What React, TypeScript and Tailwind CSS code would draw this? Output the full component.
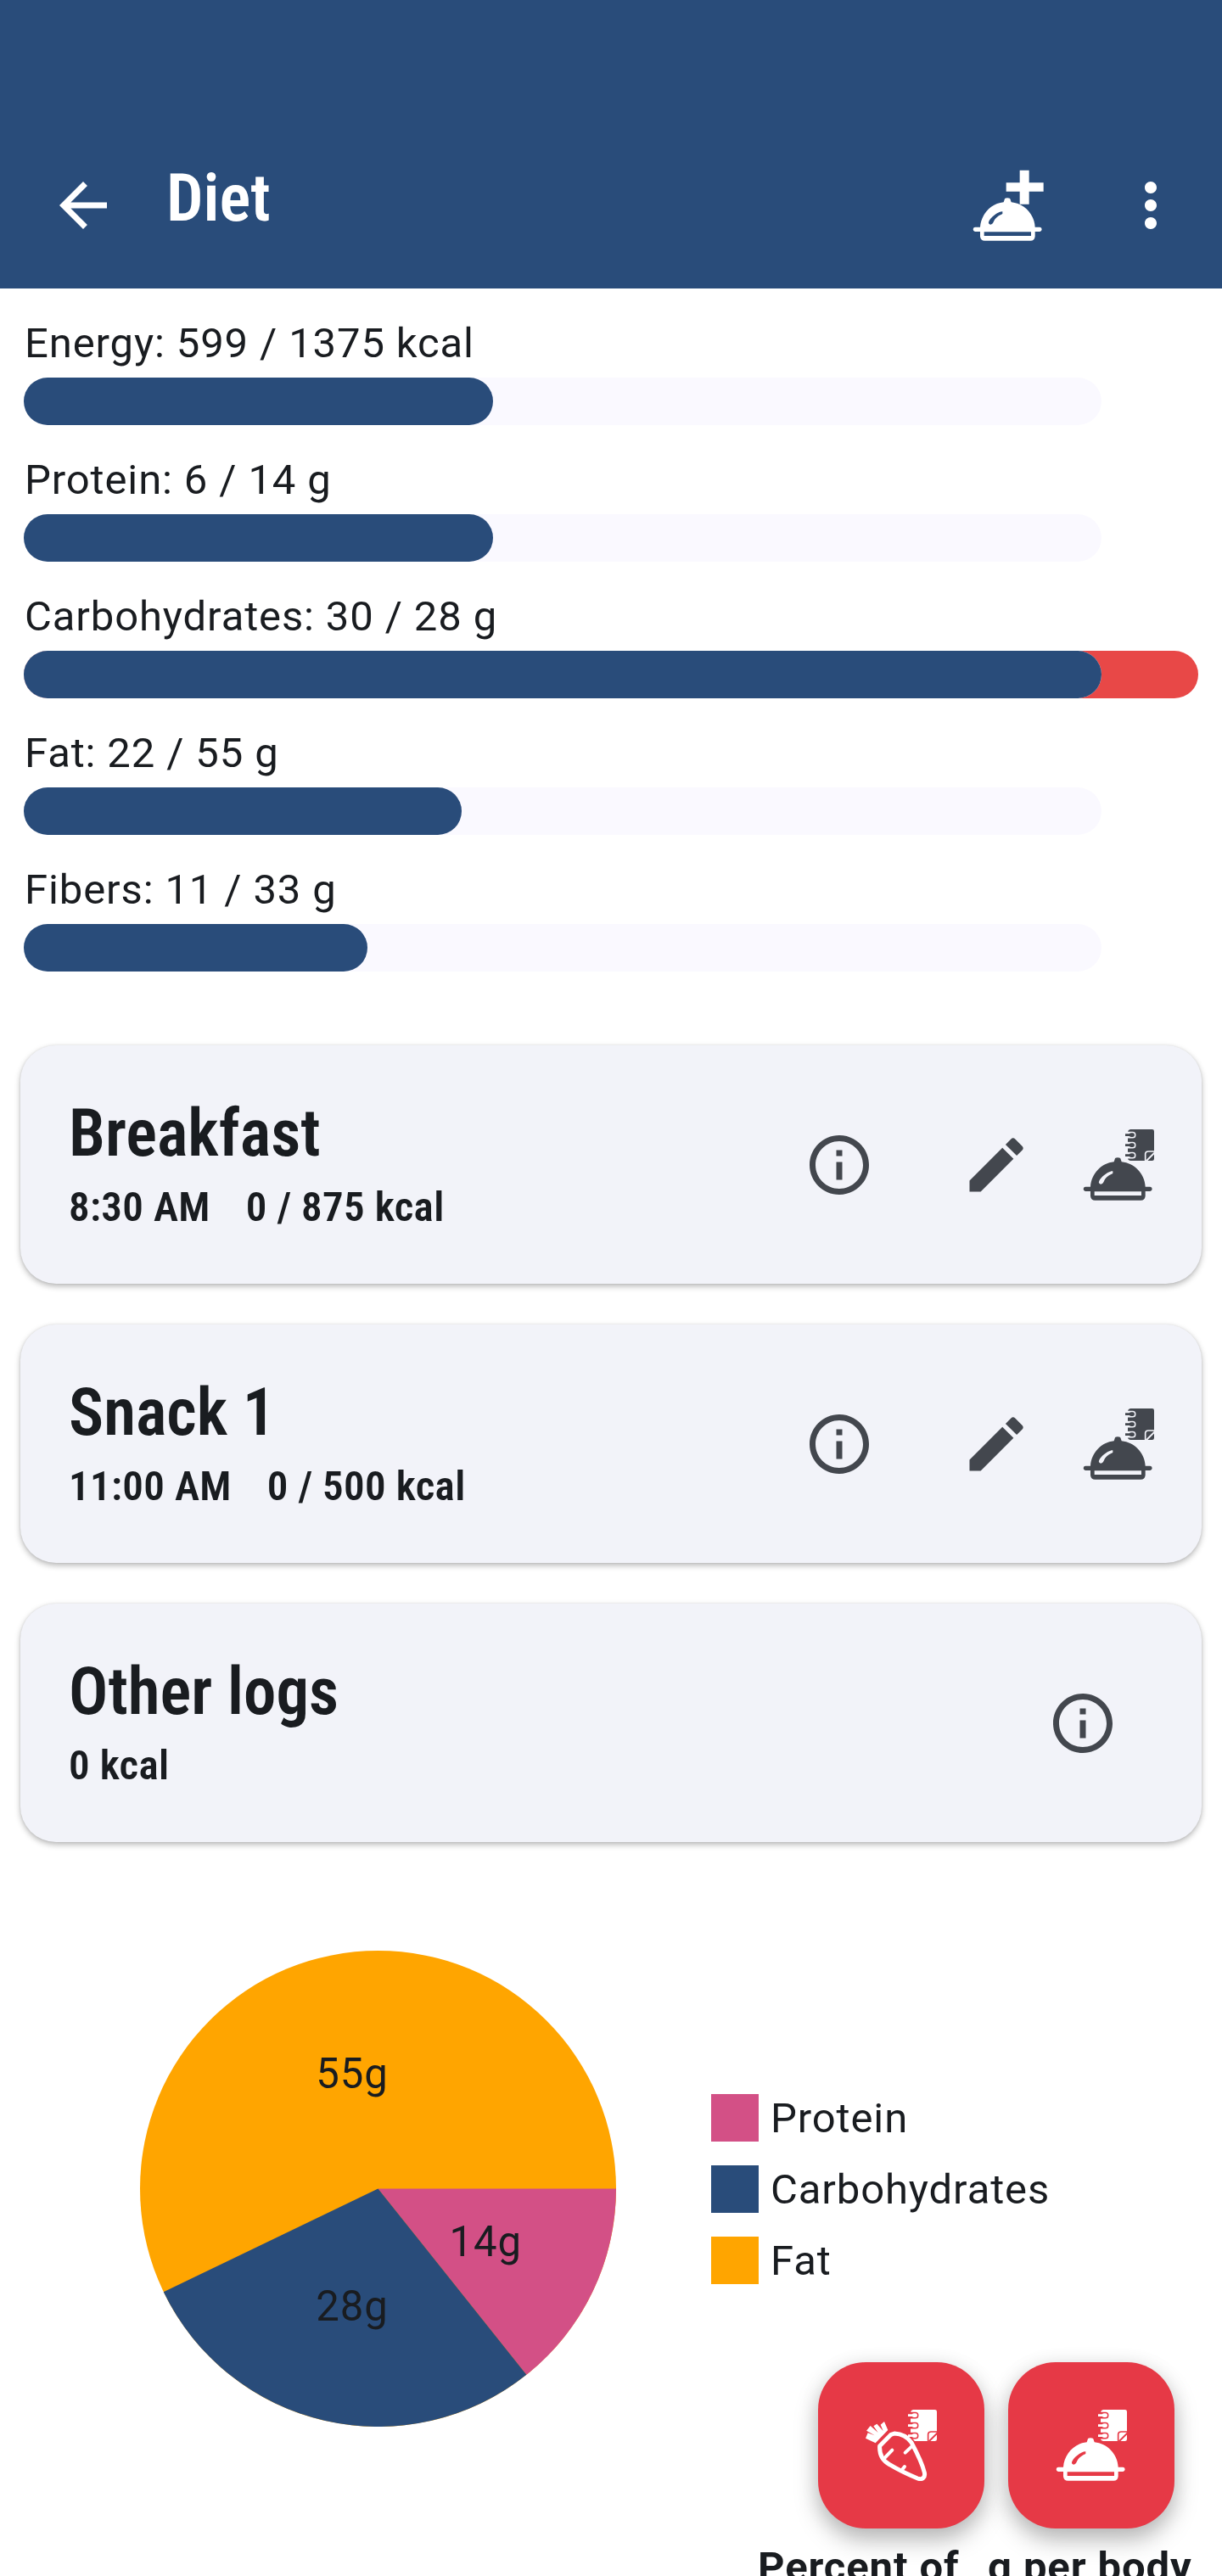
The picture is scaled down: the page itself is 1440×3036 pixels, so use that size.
import React from "react";
import { MdArrowBack, MdEdit, MdInfoOutline, MdMoreVert } from "react-icons/md";

const goals = [
  { label: "Energy: 599 / 1375 kcal", value: 43.54, over: false },
  { label: "Protein: 6 / 14 g", value: 43.54, over: false },
  { label: "Carbohydrates: 30 / 28 g", value: 100, over: true },
  { label: "Fat: 22 / 55 g", value: 40.6, over: false },
  { label: "Fibers: 11 / 33 g", value: 31.9, over: false },
];

const meals = [
  { name: "Breakfast", time: "8:30 AM", energy: "0 / 875 kcal" },
  { name: "Snack 1", time: "11:00 AM", energy: "0 / 500 kcal" },
  { name: "Other logs", time: "", energy: "0 kcal" },
];

const legend = [
  { label: "Protein", color: "bg-[#d35086]" },
  { label: "Carbohydrates", color: "bg-[#294c7a]" },
  { label: "Fat", color: "bg-[#ffa500]" },
];

const carrotPath =
  "M90 88 L50 128 C48 160 62 182 85 194 C118 214 150 229 184 243 C200 249 212 240 208 222 C200 190 176 142 162 116 C148 96 126 85 102 84 Z";

function Dish() {
  return (
    <path
      fillRule="evenodd"
      d="M113 106 Q113 100 123 100 Q134 100 134 106 L137 115 C182 119 219 157 221 203 L238 203 Q245 204 245 211 Q245 218 238 219 L221 219 L221 236 Q219 251 205 251 L43 251 Q29 251 27 236 L27 219 L9 219 Q2 218 2 211 Q2 204 9 203 L27 203 C30 157 66 119 110 115 Z M41 220 L41 234 L207 234 L207 220 Z M106 148 C91 146 54 175 57 190 C63 198 72 193 76 181 C82 168 94 162 106 156 Z"
    />
  );
}

function Notebook({ id, carrot = false }: { id: string; carrot?: boolean }) {
  return (
    <>
      <mask id={id} maskUnits="userSpaceOnUse" x="0" y="0" width="252" height="252">
        <rect width="252" height="252" fill="white" />
        <g fill="none" stroke="black" strokeLinecap="round">
          <path strokeWidth="23" d="M145 20 H176 M145 56 H176 M145 92 H176" />
          <path strokeWidth="5" d="M221 116 V86 Q222 78 232 78 H256" />
          <path strokeWidth="6" d="M224 112 L254 82" />
          {carrot && <path strokeWidth="24" d={carrotPath} />}
        </g>
      </mask>
      <path
        mask={`url(#${id})`}
        d="M168 0 H245 Q252 0 252 7 V104 Q252 111 245 111 H168 Q159 109 159 102 V9 Q160 2 168 0 Z"
      />
      {/* pieces of paper left between the rings */}
      <path d="M159 33 H172 V43 H159 Z M159 69 H172 V79 H159 Z" />
      <g fill="none" stroke="currentColor">
        <path strokeWidth="8" d="M150 20 H172 M150 56 H172 M150 92 H172" />
        <path
          strokeWidth="14"
          strokeLinecap="round"
          d="M171 20 H176 M171 56 H176 M171 92 H176"
        />
      </g>
    </>
  );
}

function AddMealIcon() {
  return (
    <svg viewBox="0 0 252 252" fill="currentColor" className="size-[84px]">
      <path d="M167 2 H200 V46 H251 V77 H200 V122 H167 V77 H119 V46 H167 Z" />
      <Dish />
    </svg>
  );
}

function LogMealIcon({ id }: { id: string }) {
  return (
    <svg viewBox="0 0 252 252" fill="currentColor" className="size-[84px]">
      <Notebook id={id} />
      <Dish />
    </svg>
  );
}

function LogFoodIcon() {
  return (
    <svg viewBox="0 0 252 252" fill="currentColor" className="size-[84px]">
      <Notebook id="log-food" carrot />
      <path d="M0 101 L8 82 L32 91 L3 74 L17 57 L44 81 L28 58 L40 50 L62 75 L53 53 L66 42 L79 72 L35 118 Z" />
      <g fill="none" stroke="currentColor" strokeWidth="15" strokeLinejoin="round">
        <path d={carrotPath} />
        <path
          strokeWidth="12"
          strokeLinecap="round"
          d="M94 143 L68 170 M163 130 L140 152 M138 201 L126 216"
        />
      </g>
    </svg>
  );
}

function Header() {
  return (
    <header className="flex h-[340px] items-center bg-[#294c7a] pt-36 pr-[42px] pl-14 text-white">
      <MdArrowBack className="size-[84px]" />
      <h1 className="mb-4 ml-14 flex-1 font-['Roboto_Condensed','Roboto',sans-serif] text-[77px] leading-[98px] font-semibold tracking-normal">
        Diet
      </h1>
      <AddMealIcon />
      <MdMoreVert className="ml-[84px] size-[84px]" />
    </header>
  );
}

function GoalBar({ label, value, over }: { label: string; value: number; over: boolean }) {
  return (
    <div>
      <p className="mb-3 pl-px leading-[57px]">{label}</p>
      <div className={over ? "rounded-full bg-[#e84847]" : ""}>
        <div className="h-14 w-[1270px] rounded-full bg-[#faf9ff]">
          <div className="h-full rounded-full bg-[#294c7a]" style={{ width: `${value}%` }}></div>
        </div>
      </div>
    </div>
  );
}

function MealCard({ name, time, energy }: { name: string; time: string; energy: string }) {
  return (
    <div className="flex h-[281px] items-center rounded-[42px] bg-[#f2f3f9] pr-14 pl-[57px] shadow-[0_3px_7px_rgba(0,0,0,0.28),0_0_3px_rgba(0,0,0,0.08)]">
      <div className="flex-1 font-['Roboto_Condensed','Roboto',sans-serif] font-semibold">
        <h2 className="text-[77px] leading-[98px] tracking-normal">{name}</h2>
        <p className="mt-[3px] mb-px flex gap-[42px] leading-[70px] tracking-[0.35px]">
          {time && <span>{time}</span>}
          <span>{energy}</span>
        </p>
      </div>
      <div className="flex items-center text-[#43474e]">
        <MdInfoOutline className={time ? "size-[84px]" : "mr-[42px] size-[84px]"} />
        {time && (
          <>
            <MdEdit className="mr-[60px] ml-[101px] size-[84px]" />
            <LogMealIcon id={`log-${name.replace(" ", "-")}`} />
          </>
        )}
      </div>
    </div>
  );
}

function MacroChart() {
  return (
    <svg viewBox="-280 -280 560 560" className="size-[561px]">
      <circle r="280" fill="#ffa500" />
      <path d="M0 0 H280 A280 280 0 0 1 174.6 218.9 Z" fill="#d35086" />
      <path d="M0 0 L174.6 218.9 A280 280 0 0 1 -252.3 121.5 Z" fill="#294c7a" />
      <g fill="#191c20" textAnchor="middle">
        <text x="-30.5" y="-118">55g</text>
        <text x="126.5" y="79">14g</text>
        <text x="-30.5" y="155">28g</text>
      </g>
    </svg>
  );
}

export default function App() {
  return (
    <div className="relative h-[3036px] w-[1440px] overflow-hidden bg-white font-['Roboto',sans-serif] text-[49px] tracking-[0.875px] text-[#191c20]">
      <Header />

      <section className="flex flex-col gap-9 px-7 pt-9">
        {goals.map((goal) => (
          <GoalBar key={goal.label} {...goal} />
        ))}
      </section>

      <section className="mt-[87px] flex flex-col gap-12 px-6">
        {meals.map((meal) => (
          <MealCard key={meal.name} {...meal} />
        ))}
      </section>

      <section className="mt-32 flex items-center pl-[165px]">
        <MacroChart />
        <ul className="mt-px ml-28 flex flex-col gap-7">
          {legend.map((item) => (
            <li key={item.label} className="flex h-14 items-center gap-3.5 leading-[57px]">
              <span className={`size-14 ${item.color}`}></span>
              {item.label}
            </li>
          ))}
        </ul>
      </section>

      <div className="mt-[137px] flex pl-[893px] leading-[57px] font-bold whitespace-nowrap">
        <span className="w-[271px]">Percent of</span>
        <span>g per body</span>
      </div>

      {/* floating action buttons */}
      <div className="absolute right-14 bottom-14 flex gap-7 text-white">
        <button className="flex size-[196px] items-center justify-center rounded-[56px] bg-[#e63946] shadow-[0_14px_28px_rgba(0,0,0,0.26),0_2px_24px_rgba(0,0,0,0.08)]">
          <LogFoodIcon />
        </button>
        <button className="flex size-[196px] items-center justify-center rounded-[56px] bg-[#e63946] shadow-[0_14px_28px_rgba(0,0,0,0.26),0_2px_24px_rgba(0,0,0,0.08)]">
          <LogMealIcon id="log-meal" />
        </button>
      </div>
    </div>
  );
}
